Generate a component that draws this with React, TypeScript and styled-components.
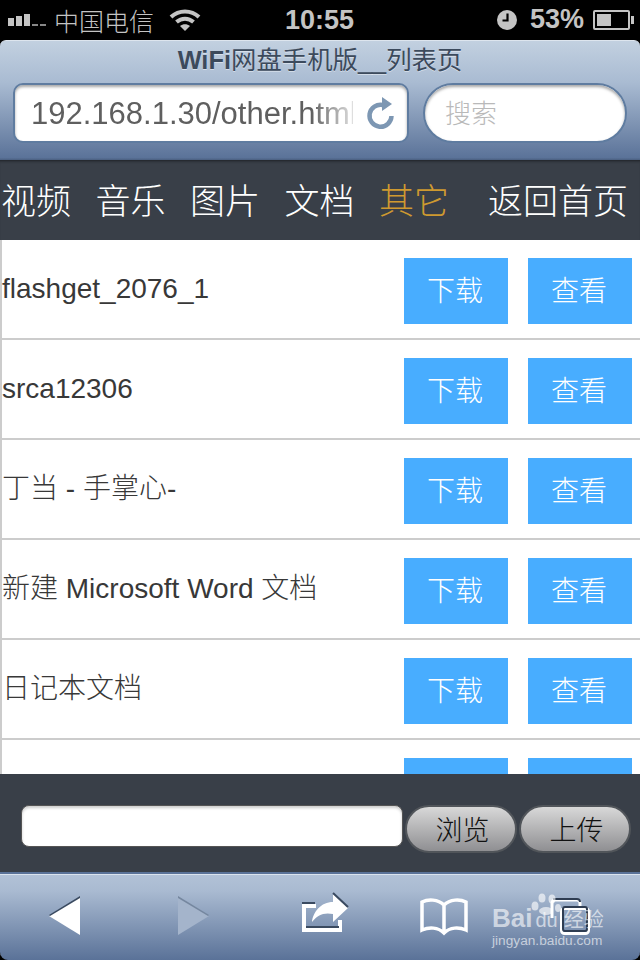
import React from 'react'
import styled, { createGlobalStyle } from 'styled-components'

const FONT = '"Liberation Sans", "Noto Sans CJK SC", sans-serif'

const GlobalStyle = createGlobalStyle`
  html, body { margin: 0; padding: 0; background: #000; }
  * { box-sizing: border-box; }
`

const Phone = styled.div`
  width: 640px;
  height: 960px;
  display: flex;
  flex-direction: column;
  overflow: hidden;
  position: relative;
  background: #000;
  font-family: ${FONT};
`

const StatusBar = styled.div`
  height: 40px;
  flex: none;
  display: flex;
  align-items: center;
  justify-content: space-between;
  padding: 0 7px 1px 8px;
  color: #c4c4c4;
  font-size: 26px;
  position: relative;
`

const StatusSide = styled.div`
  display: flex;
  align-items: center;
`

const Carrier = styled.span`
  font-size: 25px;
  font-weight: 300;
  margin: 0 15px 0 8px;
`

const Clock = styled.span`
  position: absolute;
  left: 285px;
  top: 4px;
  font-size: 27px;
  font-weight: 700;
  line-height: 32px;
`

const Percent = styled.span`
  font-size: 27px;
  font-weight: 700;
  margin: 0 9px 0 13px;
`

const Battery = styled.div`
  width: 37px;
  height: 20px;
  border: 2px solid #c4c4c4;
  border-radius: 2px;
  padding: 2px;
  position: relative;
  margin-right: 3px;

  &::before {
    content: '';
    display: block;
    width: 14px;
    height: 12px;
    background: #c4c4c4;
  }

  &::after {
    content: '';
    position: absolute;
    right: -6px;
    top: 4px;
    width: 3px;
    height: 8px;
    background: #c4c4c4;
  }
`

const BrowserBar = styled.header`
  height: 120px;
  flex: none;
  border-radius: 6px 6px 0 0;
  background: linear-gradient(#c2d0e0, #a9bbd2 35%, #5b7399 98%, #4a5f80);
  border-top: 1px solid #dde5ee;
  display: flex;
  flex-direction: column;
`

const PageTitle = styled.div`
  height: 42px;
  padding-top: 3px;
  text-align: center;
  font-size: 25.4px;
  line-height: 32px;
  color: #3c4a5c;
  text-shadow: 0 1px 0 rgba(255, 255, 255, 0.45);

  b {
    font-weight: 700;
  }
`

const FieldRow = styled.div`
  display: flex;
  gap: 14px;
  padding-left: 13px;
`

const UrlField = styled.div`
  width: 396px;
  height: 60px;
  background: #fff;
  border: 2px solid #5f7ca0;
  border-radius: 10px;
  box-shadow: inset 0 2px 3px rgba(0, 0, 0, 0.35);
  display: flex;
  align-items: center;
  padding: 2px 0 0 16px;
  position: relative;
  overflow: hidden;
`

const UrlText = styled.span`
  font-size: 31px;
  color: #5f5f5f;
  white-space: nowrap;
  width: 322px;
  overflow: hidden;
  -webkit-mask-image: linear-gradient(90deg, #000 87%, rgba(0, 0, 0, 0.2));
  mask-image: linear-gradient(90deg, #000 87%, rgba(0, 0, 0, 0.2));
`

const ReloadIcon = styled.svg`
  position: absolute;
  right: 11px;
  top: 11px;
`

const SearchField = styled.div`
  width: 204px;
  height: 60px;
  background: #fff;
  border: 2px solid #5f7ca0;
  border-radius: 30px;
  box-shadow: inset 0 2px 3px rgba(0, 0, 0, 0.35);
  padding-left: 20px;
  font-size: 26px;
  font-weight: 300;
  line-height: 58px;
  color: #b9b9b9;
`

const Nav = styled.nav`
  height: 80px;
  flex: none;
  background: #393f48;
  box-shadow: inset 0 3px 3px -2px rgba(0, 0, 0, 0.5);
  display: flex;
  align-items: center;
  padding: 0 0 3px 1px;
  font-size: 35px;
  font-weight: 300;
  color: #fff;
`

const NavItem = styled.span<{ $active?: boolean; $gap?: number }>`
  color: ${(p) => (p.$active ? '#cf9a30' : '#fff')};
  margin-right: ${(p) => p.$gap ?? 24.5}px;
  white-space: nowrap;
`

const FileList = styled.main`
  flex: 1;
  min-height: 0;
  overflow: hidden;
  background: #fff;
`

const Row = styled.div`
  height: 100px;
  display: flex;
  align-items: flex-start;
  padding: 18px 8px 0 2px;
  border-left: 2px solid #ccc;
  border-bottom: 2px solid #ccc;
`

const FileName = styled.span`
  flex: 1;
  font-size: 28px;
  font-weight: 300;
  line-height: 62px;
  color: #383838;
  white-space: nowrap;
  margin-left: -2px;
`

const ActionButton = styled.a`
  width: 104px;
  height: 66px;
  margin-left: 20px;
  padding-right: 2px;
  background: #48adff;
  color: #fff;
  font-size: 28px;
  font-weight: 300;
  line-height: 68px;
  text-align: center;
`

const UploadBar = styled.form`
  height: 98px;
  flex: none;
  background: #393f48;
  display: flex;
  align-items: flex-start;
  padding: 31px 0 0 21px;
`

const FileInput = styled.div`
  width: 382px;
  height: 42px;
  background: #fff;
  border: 1px solid #555;
  border-radius: 8px;
  box-shadow: inset 0 2px 3px rgba(0, 0, 0, 0.2);
  margin-right: 2px;
`

const PillButton = styled.button`
  width: 112px;
  height: 48px;
  margin: 0 2px 0 0;
  padding: 3px 0 0 3px;
  border: 2px solid #51555a;
  border-radius: 24px;
  background: linear-gradient(#d8d8d8, #8f8f92);
  color: #111;
  font-family: ${FONT};
  font-size: 27px;
  font-weight: 300;
  line-height: 40px;
`

const BottomBar = styled.footer`
  height: 88px;
  flex: none;
  border-top: 2px solid #5a7298;
  border-radius: 0 0 8px 8px;
  background: linear-gradient(#b2c2d7, #a9bad1 20%, #5a7298);
  box-shadow: inset 0 1px 0 #dbe3ed;
  position: relative;
`

const ToolIcon = styled.svg<{ $left: number; $top: number }>`
  position: absolute;
  left: ${(p) => p.$left}px;
  top: ${(p) => p.$top}px;
`

const Watermark = styled.div`
  position: absolute;
  left: 492px;
  top: 904px;
  width: 116px;
  color: rgba(255, 255, 255, 0.62);
  pointer-events: none;
`

const MarkLine = styled.div`
  display: flex;
  align-items: baseline;
  font-size: 26px;
  font-weight: 700;
  line-height: 28px;
  white-space: nowrap;
`

const MarkSmall = styled.span<{ $gap: number }>`
  font-size: 20px;
  margin-left: ${(p) => p.$gap}px;
  font-weight: 400;
`

const MarkUrl = styled.div`
  font-size: 13.7px;
  line-height: 16px;
  margin-top: -1px;
  white-space: nowrap;
`

const Paw = styled.svg`
  position: absolute;
  left: 38px;
  top: -11px;
`

const files = ['flashget_2076_1', 'srca12306', '丁当 - 手掌心-', '新建 Microsoft Word 文档', '日记本文档', '']
const navItems = ['视频', '音乐', '图片', '文档']

export default function App() {
  return (
    <Phone>
      <GlobalStyle />
      <StatusBar>
        <StatusSide>
          <svg width="38" height="12" viewBox="0 0 38 12">
            <rect x="0" y="4" width="6" height="8" fill="#c4c4c4" />
            <rect x="8" y="2" width="6" height="10" fill="#c4c4c4" />
            <rect x="16" y="0" width="6" height="12" fill="#c4c4c4" />
            <rect x="24" y="10" width="6" height="2" fill="#888" />
            <rect x="32" y="10" width="6" height="2" fill="#888" />
          </svg>
          <Carrier>中国电信</Carrier>
          <svg width="32" height="24" viewBox="0 0 32 24" fill="none" stroke="#c4c4c4" strokeWidth="4">
            <path d="M2 9c8-7.500 20-7.500 28 0" />
            <path d="M7.500 14c5-4.500 12-4.500 17 0" />
            <path d="M16 23l-5-5c3-2.400 7-2.400 10 0z" fill="#c4c4c4" stroke="none" />
          </svg>
        </StatusSide>
        <Clock>10:55</Clock>
        <StatusSide>
          <svg width="20" height="20" viewBox="0 0 20 20">
            <circle cx="10" cy="10" r="10" fill="#c4c4c4" />
            <path d="M10.500 3.500v7H5.500" fill="none" stroke="#000" strokeWidth="2.200" />
          </svg>
          <Percent>53%</Percent>
          <Battery />
        </StatusSide>
      </StatusBar>

      <BrowserBar>
        <PageTitle>
          <b>WiFi</b>网盘手机版__列表页
        </PageTitle>
        <FieldRow>
          <UrlField>
            <UrlText>192.168.1.30/other.html</UrlText>
            <ReloadIcon width="30" height="36" viewBox="0 0 30 36" fill="none">
              <path d="M17 9A11 11 0 1 0 25.500 20" stroke="#7d97b3" strokeWidth="4.500" />
              <path d="M16 1l10 7-10 7z" fill="#7d97b3" />
            </ReloadIcon>
          </UrlField>
          <SearchField>搜索</SearchField>
        </FieldRow>
      </BrowserBar>

      <Nav>
        {navItems.map((item) => (
          <NavItem key={item}>{item}</NavItem>
        ))}
        <NavItem $active $gap={39}>
          其它
        </NavItem>
        <NavItem>返回首页</NavItem>
      </Nav>

      <FileList>
        {files.map((name, i) => (
          <Row key={i}>
            <FileName>{name}</FileName>
            <ActionButton>下载</ActionButton>
            <ActionButton>查看</ActionButton>
          </Row>
        ))}
      </FileList>

      <UploadBar>
        <FileInput />
        <PillButton type="button">浏览</PillButton>
        <PillButton type="button">上传</PillButton>
      </UploadBar>

      <BottomBar>
        <ToolIcon $left={48} $top={22} width="32" height="40" viewBox="0 0 32 40">
          <path d="M32 1L1 20l31 19z" fill="#fff" />
          <path d="M32 0L1 19l1 1L32 2z" fill="#3a4a60" />
        </ToolIcon>
        <ToolIcon $left={177} $top={22} width="32" height="40" viewBox="0 0 32 40">
          <path d="M1 1l31 19L1 39z" fill="#a4b4cb" />
          <path d="M1 0l31 19-1 1L1 2z" fill="#75879f" />
        </ToolIcon>
        <ToolIcon $left={300} $top={18} width="50" height="42" viewBox="0 0 50 42" fill="none">
          <path d="M16 14H4v24h36V28" stroke="#fff" strokeWidth="4" />
          <path d="M2 11h13M6 35h33" stroke="#3a4a60" strokeWidth="2" />
          <path d="M33 2l15 14-15 14v-8c-9-2-16 1-21 8 1-10 9-20 21-20z" fill="#fff" />
          <path d="M33 1l15 14" stroke="#3a4a60" strokeWidth="2" />
        </ToolIcon>
        <ToolIcon $left={419} $top={24} width="50" height="38" viewBox="0 0 50 38" fill="none">
          <path d="M25 7C19 1 9 1 3 4v28c7-3 16-3 22 3 6-6 15-6 22-3V4c-6-3-16-3-22 3zM25 7v28" stroke="#fff" strokeWidth="3.500" />
        </ToolIcon>
        <ToolIcon $left={548} $top={22} width="44" height="40" viewBox="0 0 44 40" fill="none">
          <path d="M4 22V7a3 3 0 0 1 3-3h22a3 3 0 0 1 3 3v3" stroke="#fff" strokeWidth="3" />
          <path d="M5 3h24a3 3 0 0 1 3 3" stroke="#2f3d52" strokeWidth="2" />
          <rect x="13.500" y="12.500" width="27" height="25" rx="3" stroke="#fff" strokeWidth="3" />
          <rect x="15" y="11" width="24" height="24" rx="2" stroke="#2f3d52" strokeWidth="2" />
        </ToolIcon>
      </BottomBar>

      <Watermark>
        <Paw width="32" height="28" viewBox="0 0 32 28" fill="currentColor">
          <ellipse cx="5" cy="13" rx="3.500" ry="4.500" />
          <ellipse cx="12" cy="5" rx="3.500" ry="4.500" />
          <ellipse cx="22" cy="6" rx="3.500" ry="4.500" />
          <ellipse cx="28" cy="15" rx="3" ry="4" />
          <ellipse cx="16" cy="18" rx="7" ry="4" />
        </Paw>
        <MarkLine>
          Bai
          <MarkSmall $gap={3}>du</MarkSmall>
          <MarkSmall $gap={6}>经验</MarkSmall>
        </MarkLine>
        <MarkUrl>jingyan.baidu.com</MarkUrl>
      </Watermark>
    </Phone>
  )
}
